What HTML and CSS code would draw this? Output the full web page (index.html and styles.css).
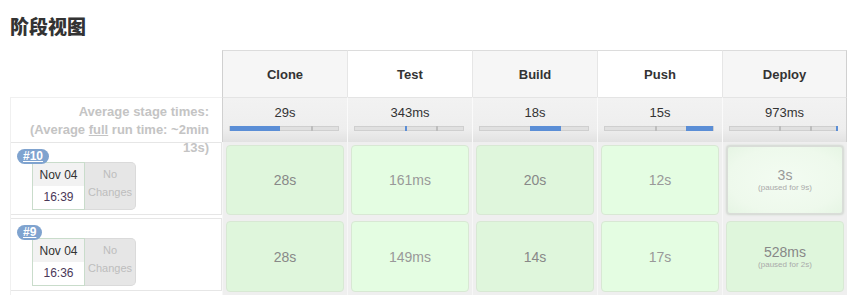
FILE: index.html
```html
<!DOCTYPE html>
<html>
<head>
  <meta charset="UTF-8" />
  <link rel="stylesheet" href="styles.css">
</head>
<body>
  <h2 class="title">阶段视图</h2>

  <div class="stage-view">
    <div class="corner"></div>
    <div class="stage-name odd">Clone</div>
    <div class="stage-name">Test</div>
    <div class="stage-name odd">Build</div>
    <div class="stage-name">Push</div>
    <div class="stage-name odd">Deploy</div>

    <div class="avg-label">
      Average stage times:<br>
      (Average <u>full</u> run time: ~2min<br>
      13s)
    </div>
    <div class="avg odd">
      <div class="avg-time">29s</div>
      <div class="bar">
        <div class="fill" style="left: 0; width: 46%;"></div>
        <div class="tick" style="left: 75%;"></div>
      </div>
    </div>
    <div class="avg">
      <div class="avg-time">343ms</div>
      <div class="bar">
        <div class="tick blue" style="left: 46%;"></div>
        <div class="tick" style="left: 75%;"></div>
      </div>
    </div>
    <div class="avg odd">
      <div class="avg-time">18s</div>
      <div class="bar">
        <div class="fill" style="left: 46%; width: 29%;"></div>
      </div>
    </div>
    <div class="avg">
      <div class="avg-time">15s</div>
      <div class="bar">
        <div class="tick" style="left: 46%;"></div>
        <div class="fill" style="left: 75%; width: 25%;"></div>
      </div>
    </div>
    <div class="avg odd">
      <div class="avg-time">973ms</div>
      <div class="bar">
        <div class="tick" style="left: 46%;"></div>
        <div class="tick" style="left: 75%;"></div>
        <div class="tick blue" style="left: 99%;"></div>
      </div>
    </div>

    <!-- build #10 -->
    <div class="build">
      <div class="build-box">
        <span class="badge">#10</span>
        <div class="date">
          <div class="day">Nov 04</div>
          <div class="time">16:39</div>
        </div>
        <div class="changes">No<br>Changes</div>
      </div>
    </div>
    <div class="cell"><div class="stage-cell dark">28s</div></div>
    <div class="cell"><div class="stage-cell light">161ms</div></div>
    <div class="cell"><div class="stage-cell dark">20s</div></div>
    <div class="cell"><div class="stage-cell light">12s</div></div>
    <div class="cell"><div class="stage-cell paused">3s<span class="note">(paused for 9s)</span></div></div>

    <!-- build #9 -->
    <div class="build">
      <div class="build-box">
        <span class="badge">#9</span>
        <div class="date">
          <div class="day">Nov 04</div>
          <div class="time">16:36</div>
        </div>
        <div class="changes">No<br>Changes</div>
      </div>
    </div>
    <div class="cell"><div class="stage-cell dark">28s</div></div>
    <div class="cell"><div class="stage-cell light">149ms</div></div>
    <div class="cell"><div class="stage-cell dark">14s</div></div>
    <div class="cell"><div class="stage-cell light">17s</div></div>
    <div class="cell"><div class="stage-cell dark">528ms<span class="note">(paused for 2s)</span></div></div>
  </div>
</body>
</html>
```

FILE: styles.css
```css
body {
  margin: 0;
  padding: 0 10px;
  font-family: "Liberation Sans", Arial, sans-serif;
  background: #fff;
  color: #333;
}

.title {
  margin: 0;
  padding-top: 14px;
  height: 36px;
  font-family: "Noto Sans CJK SC", sans-serif;
  font-size: 19px;
  font-weight: 900;
  line-height: 24px;
  color: #333;
}

.stage-view {
  display: grid;
  grid-template-columns: 212px repeat(5, 125px);
  grid-template-rows: 47px 45px 76px 77px;
}

.corner {
  background: #fff;
}

.stage-name {
  display: flex;
  align-items: center;
  justify-content: center;
  font-size: 13px;
  font-weight: bold;
  color: #333;
  background: #fff;
  border-top: 1px solid #dcdcdc;
  border-left: 1px solid #e6e6e6;
}

.stage-name.odd {
  background: #f6f6f6;
}

.stage-name:nth-child(2) {
  border-left: 1px solid #d0d0d0;
}

.stage-name:nth-child(6) {
  border-right: 1px solid #d0d0d0;
}

.avg-label {
  position: relative;
  z-index: 2;
  padding: 5px 13px 0 0;
  text-align: right;
  font-size: 13px;
  font-weight: bold;
  line-height: 18px;
  color: #c4c4c4;
  border-top: 1px solid #f0f0f0;
  border-left: 1px solid #f0f0f0;
}

.avg {
  padding-top: 7px;
  background: linear-gradient(#f2f2f2 0%, #eeeeee 70%, #e2e2e2 100%);
  border-left: 1px solid #fafafa;
  border-top: 1px solid #e4e4e4;
}

.avg:nth-child(8) {
  border-left: 1px solid #d0d0d0;
}

.avg:nth-child(12) {
  border-right: 1px solid #d0d0d0;
}

.avg-time {
  text-align: center;
  font-size: 13px;
  line-height: 15px;
  color: #333;
}

.bar {
  position: relative;
  height: 3px;
  margin: 6px 8px 0 6px;
  background: #e0e0e0;
  border: 1px solid #cfcfcf;
}

.fill {
  position: absolute;
  top: -1px;
  bottom: -1px;
  background: #5b8ed6;
}

.tick {
  position: absolute;
  top: -1px;
  bottom: -1px;
  width: 2px;
  background: #bdbdbd;
}

.tick.blue {
  background: #5b8ed6;
}

.build {
  border-left: 1px solid #f0f0f0;
}

.build-box {
  position: relative;
  display: flex;
  height: 73px;
  padding: 19px 0 0 21px;
  box-sizing: border-box;
  border: 1px solid #e6e6e6;
  border-left: none;
}

.badge {
  position: absolute;
  left: 6px;
  top: 6px;
  padding: 0 6px;
  height: 15px;
  line-height: 15px;
  border-radius: 8px;
  background: #7fa3cf;
  color: #fff;
  font-size: 12px;
  font-weight: bold;
  text-decoration: underline;
  z-index: 1;
}

.date {
  width: 51px;
  height: 46px;
  border: 1px solid #c9dccb;
  background: #fff;
  font-size: 12px;
  text-align: center;
}

.day {
  height: 23px;
  line-height: 24px;
  background: #f2f2f2;
  color: #333;
}

.time {
  line-height: 23px;
  color: #4a3858;
}

.changes {
  width: 50px;
  height: 44px;
  padding-top: 2px;
  border: 1px solid #dadada;
  border-left: none;
  border-radius: 0 5px 5px 0;
  background: #e6e6e6;
  color: #bdbdbd;
  font-size: 11px;
  line-height: 18px;
  text-align: center;
}

.cell {
  padding: 3px;
  background: #efefef;
  border-left: 1px solid #f7f7f7;
}

.stage-cell {
  display: flex;
  flex-direction: column;
  align-items: center;
  justify-content: center;
  height: 100%;
  box-sizing: border-box;
  border: 1px solid #d8e8d4;
  border-radius: 4px;
  font-size: 14px;
  color: #888;
}

.stage-cell.dark {
  background: #dff6dc;
}

.stage-cell.light {
  background: #e4fde2;
  color: #999;
}

.stage-cell.paused {
  background: radial-gradient(ellipse at center, #f3fcf2 0%, #eef9ec 70%, #e6f5e4 100%);
  border: 2px solid #d9ddd8;
  box-shadow: 0 0 2px #cfd8cf;
  color: #999;
}

.note {
  font-size: 8px;
  line-height: 10px;
  color: #aaa;
}
```
